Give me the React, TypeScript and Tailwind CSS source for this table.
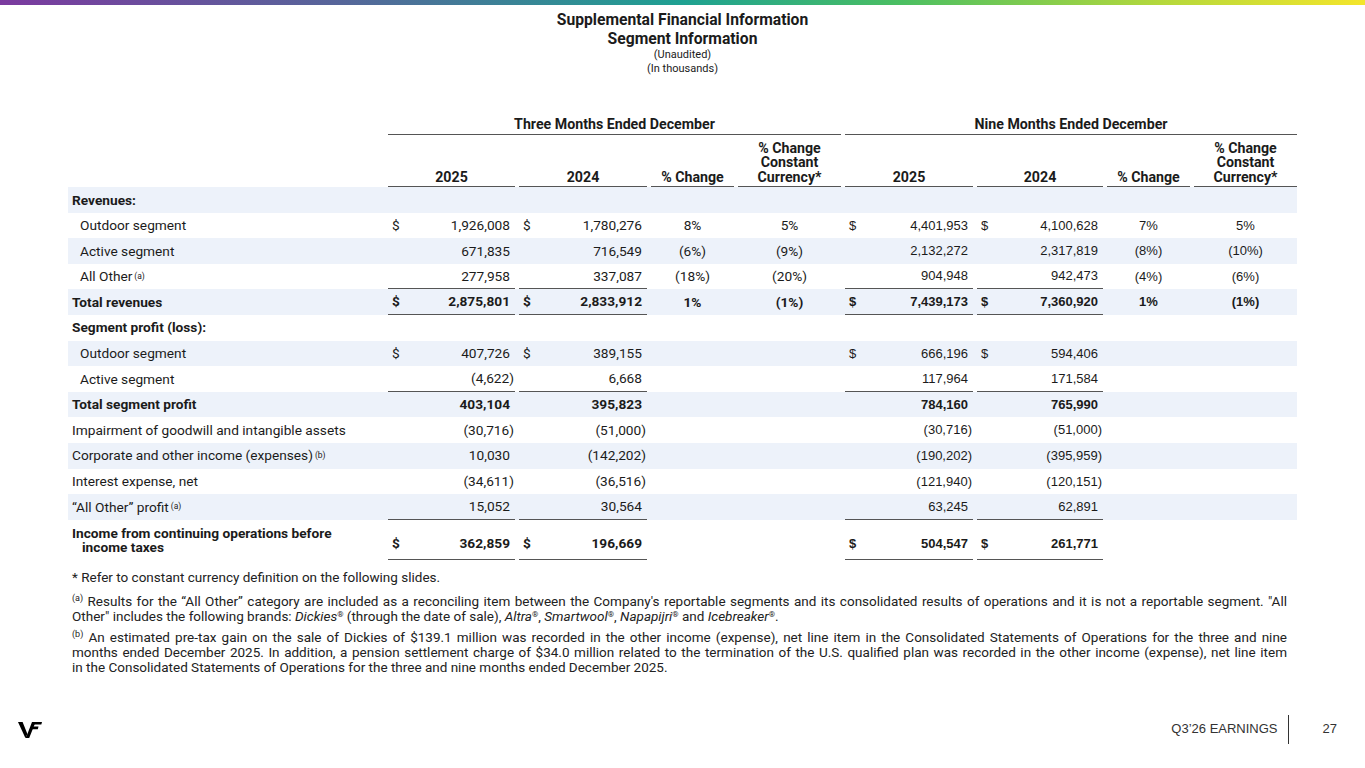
import type { ReactNode } from "react";

const COLS = "grid grid-cols-[316px_127px_128px_83px_103px_128px_126px_83px_103px] gap-x-[4px]";

interface Row {
  label: ReactNode;
  indent?: boolean;
  bold?: boolean;
  band?: boolean;
  dollar?: boolean;
  rule?: boolean;
  tall?: boolean;
  q?: string[];
  n?: string[];
}

const Sup = ({ children }: { children: ReactNode }) => (
  <sup className="relative -top-[1px] ml-[2px] text-[8.5px] font-normal">{children}</sup>
);

const ROWS: Row[] = [
  { label: "Revenues:", bold: true, band: true },
  {
    label: "Outdoor segment", indent: true, dollar: true,
    q: ["1,926,008", "1,780,276", "8%", "5%"], n: ["4,401,953", "4,100,628", "7%", "5%"],
  },
  {
    label: "Active segment", indent: true, band: true,
    q: ["671,835", "716,549", "(6%)", "(9%)"], n: ["2,132,272", "2,317,819", "(8%)", "(10%)"],
  },
  {
    label: <>All Other<Sup>(a)</Sup></>, indent: true, rule: true,
    q: ["277,958", "337,087", "(18%)", "(20%)"], n: ["904,948", "942,473", "(4%)", "(6%)"],
  },
  {
    label: "Total revenues", bold: true, band: true, dollar: true, rule: true,
    q: ["2,875,801", "2,833,912", "1%", "(1%)"], n: ["7,439,173", "7,360,920", "1%", "(1%)"],
  },
  { label: "Segment profit (loss):", bold: true },
  {
    label: "Outdoor segment", indent: true, band: true, dollar: true,
    q: ["407,726", "389,155"], n: ["666,196", "594,406"],
  },
  {
    label: "Active segment", indent: true, rule: true,
    q: ["(4,622)", "6,668"], n: ["117,964", "171,584"],
  },
  {
    label: "Total segment profit", bold: true, band: true,
    q: ["403,104", "395,823"], n: ["784,160", "765,990"],
  },
  {
    label: "Impairment of goodwill and intangible assets",
    q: ["(30,716)", "(51,000)"], n: ["(30,716)", "(51,000)"],
  },
  {
    label: <>Corporate and other income (expenses)<Sup>(b)</Sup></>, band: true,
    q: ["10,030", "(142,202)"], n: ["(190,202)", "(395,959)"],
  },
  {
    label: "Interest expense, net",
    q: ["(34,611)", "(36,516)"], n: ["(121,940)", "(120,151)"],
  },
  {
    label: <>“All Other” profit<Sup>(a)</Sup></>, band: true, rule: true,
    q: ["15,052", "30,564"], n: ["63,245", "62,891"],
  },
  {
    label: (
      <span className="block leading-[14px]">
        Income from continuing operations before
        <span className="block pl-[10px]">income taxes</span>
      </span>
    ),
    bold: true, dollar: true, rule: true, tall: true,
    q: ["362,859", "196,669"], n: ["504,547", "261,771"],
  },
];

function Money({
  value, dollar, rule, tall, arial,
}: { value?: string; dollar?: boolean; rule?: boolean; tall?: boolean; arial?: boolean }) {
  if (!value) return <div />;
  const neg = value.startsWith("(");
  return (
    <div
      className={`flex justify-between pl-[4px] ${tall ? "items-end pb-[5px]" : "items-center"} ${neg ? "pr-[1px]" : "pr-[5px]"} ${rule ? "border-b border-[#555]" : ""} ${arial ? "font-['Liberation_Sans',sans-serif] text-[13px]" : ""}`}
    >
      <span>{dollar ? "$" : ""}</span>
      <span>{value}</span>
    </div>
  );
}

function Pct({ value, tall, arial }: { value?: string; tall?: boolean; arial?: boolean }) {
  return (
    <div
      className={`flex justify-center ${tall ? "items-end pb-[5px]" : "items-center"} ${arial ? "font-['Liberation_Sans',sans-serif] text-[13px]" : ""}`}
    >
      {value ?? ""}
    </div>
  );
}

function DataRow({ row }: { row: Row }) {
  return (
    <div
      className={`${COLS} ${row.tall ? "h-[40px]" : "h-[25.6px]"} ${row.band ? "bg-[#edf2fa]" : ""} ${row.bold ? "font-bold" : ""}`}
    >
      <div className={`flex items-center ${row.indent ? "pl-[12px]" : "pl-[4px]"}`}>
        {row.label}
      </div>
      <Money value={row.q?.[0]} dollar={row.dollar} rule={row.rule} tall={row.tall} />
      <Money value={row.q?.[1]} dollar={row.dollar} rule={row.rule} tall={row.tall} />
      <Pct value={row.q?.[2]} tall={row.tall} />
      <Pct value={row.q?.[3]} tall={row.tall} />
      <Money value={row.n?.[0]} dollar={row.dollar} rule={row.rule} tall={row.tall} arial />
      <Money value={row.n?.[1]} dollar={row.dollar} rule={row.rule} tall={row.tall} arial />
      <Pct value={row.n?.[2]} tall={row.tall} arial />
      <Pct value={row.n?.[3]} tall={row.tall} arial />
    </div>
  );
}

const HEADS = ["2025", "2024", "% Change", "CC"];

function ColHead({ label }: { label: string }) {
  return (
    <div className="flex h-[52px] items-end justify-center border-b border-[#555] pb-[2px] text-center text-[14.2px] leading-[14.5px] font-bold">
      {label === "CC"
        ? (
          <span>
            % Change
            <br />
            Constant
            <br />
            Currency*
          </span>
        )
        : label}
    </div>
  );
}

function VfLogo() {
  return (
    <svg width="24" height="17" viewBox="0 0 24 17" className="text-black">
      <polygon points="0,1 4.6,1 9.4,13 7.4,17" fill="currentColor" />
      <polygon points="7.4,17 9.4,13 14,1 17.6,1 11.2,17" fill="currentColor" />
      <polygon points="15.2,1 24,1 23.3,3.6 14.2,3.6" fill="currentColor" />
      <polygon points="13.5,5.6 20.5,5.6 19.8,8.2 12.5,8.2" fill="currentColor" />
    </svg>
  );
}

const Reg = () => <sup className="text-[8px] not-italic">®</sup>;

const NoteSup = ({ children }: { children: ReactNode }) => (
  <sup className="text-[9px]">{children}</sup>
);

export default function App() {
  return (
    <div className="flex h-[768px] w-[1365px] flex-col overflow-hidden bg-white font-['Roboto',sans-serif] text-[13.7px] text-[#1b1b1b]">
      <div className="h-[5px] w-full bg-[linear-gradient(90deg,#7b3a9f_0%,#56669a_25%,#1ea192_50%,#4bbf62_66%,#b4d83c_85%,#f4e52b_100%)]" />

      <header className="pt-[5px] text-center">
        <h1 className="text-[15.7px] leading-[19px] font-bold">Supplemental Financial Information</h1>
        <h2 className="text-[15.7px] leading-[19px] font-bold">Segment Information</h2>
        <p className="text-[11px] leading-[14px]">(Unaudited)</p>
        <p className="text-[11px] leading-[14px]">(In thousands)</p>
      </header>

      <section className="mt-[40px] ml-[68px] w-[1229px]">
        <div className={`${COLS} text-[14.2px] font-bold`}>
          <div />
          <div className="col-span-4 border-b border-[#555] pb-[2px] text-center leading-[16px]">
            Three Months Ended December
          </div>
          <div className="col-span-4 border-b border-[#555] pb-[2px] text-center leading-[16px]">
            Nine Months Ended December
          </div>
        </div>
        <div className={COLS}>
          <div />
          {HEADS.map(h => <ColHead key={`q${h}`} label={h} />)}
          {HEADS.map(h => <ColHead key={`n${h}`} label={h} />)}
        </div>
        {ROWS.map((row, i) => <DataRow key={i} row={row} />)}
      </section>

      <section className="mt-[10px] ml-[72px] w-[1215px] text-[13.5px] leading-[15px] text-[#222]">
        <p>* Refer to constant currency definition on the following slides.</p>
        <p className="mt-[9px]">
          <span className="block text-justify [text-align-last:justify]">
            <NoteSup>(a)</NoteSup>
            {" "}
            Results for the “All Other” category are included as a reconciling item between the Company&apos;s reportable segments and its consolidated results of operations and it is not a reportable segment. &quot;All
          </span>
          <span className="block">
            Other&quot; includes the following brands:
            {" "}
            <i>Dickies</i>
            <Reg />
            {" "}
            (through the date of sale),
            {" "}
            <i>Altra</i>
            <Reg />
            ,
            {" "}
            <i>Smartwool</i>
            <Reg />
            ,
            {" "}
            <i>Napapijri</i>
            <Reg />
            {" "}
            and
            {" "}
            <i>Icebreaker</i>
            <Reg />
            .
          </span>
        </p>
        <p className="mt-[6px]">
          <span className="block text-justify [text-align-last:justify]">
            <NoteSup>(b)</NoteSup>
            {" "}
            An estimated pre-tax gain on the sale of Dickies of $139.1 million was recorded in the other income (expense), net line item in the Consolidated Statements of Operations for the three and nine
          </span>
          <span className="block text-justify [text-align-last:justify]">
            months ended December 2025. In addition, a pension settlement charge of $34.0 million related to the termination of the U.S. qualified plan was recorded in the other income (expense), net line item
          </span>
          <span className="block">
            in the Consolidated Statements of Operations for the three and nine months ended December 2025.
          </span>
        </p>
      </section>

      <footer className="mt-auto flex h-[78px] items-center pr-[28px] pl-[18px]">
        <VfLogo />
        <div className="ml-auto flex items-center font-['Liberation_Sans',sans-serif] text-[#333]">
          <span className="text-[13px]">Q3’26 EARNINGS</span>
          <span className="mx-[10px] h-[29px] w-px bg-[#333]" />
          <span className="ml-[24px] text-[13px]">27</span>
        </div>
      </footer>
    </div>
  );
}
